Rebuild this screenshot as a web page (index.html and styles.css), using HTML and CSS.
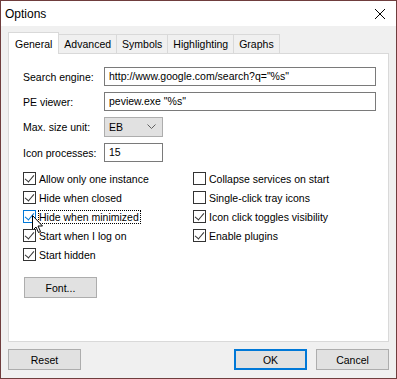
FILE: index.html
```html
<!DOCTYPE html>
<html lang="en">
<head>
  <meta charset="UTF-8" />
  <title>Options</title>
  <link rel="stylesheet" href="styles.css">
</head>
<body>
  <div class="window">
    <div class="titlebar">
      <span class="title">Options</span>
      <svg class="close" width="12" height="12" viewBox="0 0 12 12">
        <path d="M1 1 L11 11 M11 1 L1 11" stroke="#000" stroke-width="1" fill="none"/>
      </svg>
    </div>
    <div class="client">
      <div class="tabs">
        <div class="tab active">General</div>
        <div class="tab">Advanced</div>
        <div class="tab">Symbols</div>
        <div class="tab">Highlighting</div>
        <div class="tab">Graphs</div>
      </div>
      <div class="panel">
        <div class="form">
          <label>Search engine:</label>
          <div class="input wide">http://www.google.com/search?q="%s"</div>
          <label>PE viewer:</label>
          <div class="input wide">peview.exe "%s"</div>
          <label>Max. size unit:</label>
          <div class="combo">EB
            <svg width="9" height="6" viewBox="0 0 9 6"><path d="M0.5 0.5 L4.5 4.5 L8.5 0.5" stroke="#606060" fill="none"/></svg>
          </div>
          <label>Icon processes:</label>
          <div class="input short">15</div>
        </div>

        <div class="checks">
          <div class="col left">
            <div class="check"><span class="box on"></span>Allow only one instance</div>
            <div class="check"><span class="box on"></span>Hide when closed</div>
            <div class="check"><span class="box on hot"></span><span class="focus">Hide when minimized</span>
              <svg class="cursor" width="12" height="19" viewBox="0 0 12 19"><path d="M0.5 0.5 L0.5 15.5 L4 12 L6.5 17.5 L8.5 16.5 L6 11 L10.5 11 Z" fill="#fff" stroke="#000"/></svg>
            </div>
            <div class="check"><span class="box on"></span>Start when I log on</div>
            <div class="check"><span class="box on"></span>Start hidden</div>
          </div>
          <div class="col">
            <div class="check"><span class="box"></span>Collapse services on start</div>
            <div class="check"><span class="box"></span>Single-click tray icons</div>
            <div class="check"><span class="box on"></span>Icon click toggles visibility</div>
            <div class="check"><span class="box on"></span>Enable plugins</div>
          </div>
        </div>

        <button class="btn font-btn">Font...</button>
      </div>
      <div class="footer">
        <button class="btn">Reset</button>
        <div class="spacer"></div>
        <button class="btn default">OK</button>
        <button class="btn">Cancel</button>
      </div>
    </div>
  </div>
</body>
</html>
```

FILE: styles.css
```css
* {
  box-sizing: border-box;
  margin: 0;
  padding: 0;
}
body {
  font-family: "Liberation Sans", Arial, sans-serif;
  font-size: 10.5px;
  color: #000;
  background: #fff;
}
.window {
  width: 397px;
  height: 379px;
  border: 1px solid #6f3d3d;
  display: flex;
  flex-direction: column;
  background: #f0f0f0;
}
.titlebar {
  height: 25px;
  background: #fff;
  display: flex;
  align-items: center;
  padding: 0 10px 0 4px;
}
.title {
  font-size: 12px;
  flex: 1;
}

.client {
  flex: 1;
  padding: 5px 7px 0 7px;
  display: flex;
  flex-direction: column;
}
.tabs {
  display: flex;
  align-items: flex-end;
  height: 22px;
}
.tab {
  height: 19px;
  padding: 0 5px;
  border: 1px solid #d9d9d9;
  border-bottom: none;
  border-left: none;
  background: #f0f0f0;
  line-height: 18px;
}
.tab.active {
  height: 22px;
  background: #fff;
  border-left: 1px solid #d9d9d9;
  padding: 0 6px;
  line-height: 22px;
  margin-bottom: -1px;
  position: relative;
  z-index: 1;
}
.panel {
  height: 289px;
  width: 381px;
  background: #fff;
  border: 1px solid #d9d9d9;
  padding: 13px 0 0 14px;
}

.form {
  display: grid;
  grid-template-columns: 81px auto;
  row-gap: 6px;
  align-items: center;
}
.form label {
  white-space: nowrap;
}
.input {
  height: 19px;
  border: 1px solid #7a7a7a;
  padding: 0 4px;
  line-height: 17px;
  background: #fff;
  white-space: nowrap;
}
.wide {
  width: 272px;
}
.short {
  width: 59px;
}
.combo {
  width: 59px;
  height: 20px;
  border: 1px solid #adadad;
  background: #e1e1e1;
  display: flex;
  align-items: center;
  justify-content: space-between;
  padding: 0 6px 0 4px;
}

.checks {
  display: flex;
  margin-top: 10px;
}
.col {
  display: flex;
  flex-direction: column;
  gap: 6px;
}
.col.left {
  width: 170px;
}
.check {
  display: flex;
  align-items: center;
  height: 13px;
  white-space: nowrap;
  position: relative;
}
.box {
  width: 13px;
  height: 13px;
  border: 1px solid #333;
  background: #fff;
  margin-right: 3px;
  flex: none;
  position: relative;
}
.box.on::after {
  content: "";
  position: absolute;
  left: 3px;
  top: 0px;
  width: 4px;
  height: 8px;
  border: solid #333;
  border-width: 0 1px 1px 0;
  transform: rotate(40deg);
}
.box.hot {
  border-color: #0078d7;
}
.box.hot::after {
  border-color: #0078d7;
}
.focus {
  outline: 1px dotted #000;
  padding: 0 1px 0 0;
}
.cursor {
  position: absolute;
  left: 9px;
  top: 5px;
}

.btn {
  font-family: inherit;
  font-size: 10.5px;
  width: 73px;
  height: 21px;
  background: #e1e1e1;
  border: 1px solid #adadad;
  color: #000;
}
.font-btn {
  margin: 16px 0 0 1px;
}
.footer {
  display: flex;
  padding-top: 7px;
  gap: 9px;
}
.spacer {
  flex: 1;
}
.btn.default {
  border: 2px solid #0078d7;
}
```
